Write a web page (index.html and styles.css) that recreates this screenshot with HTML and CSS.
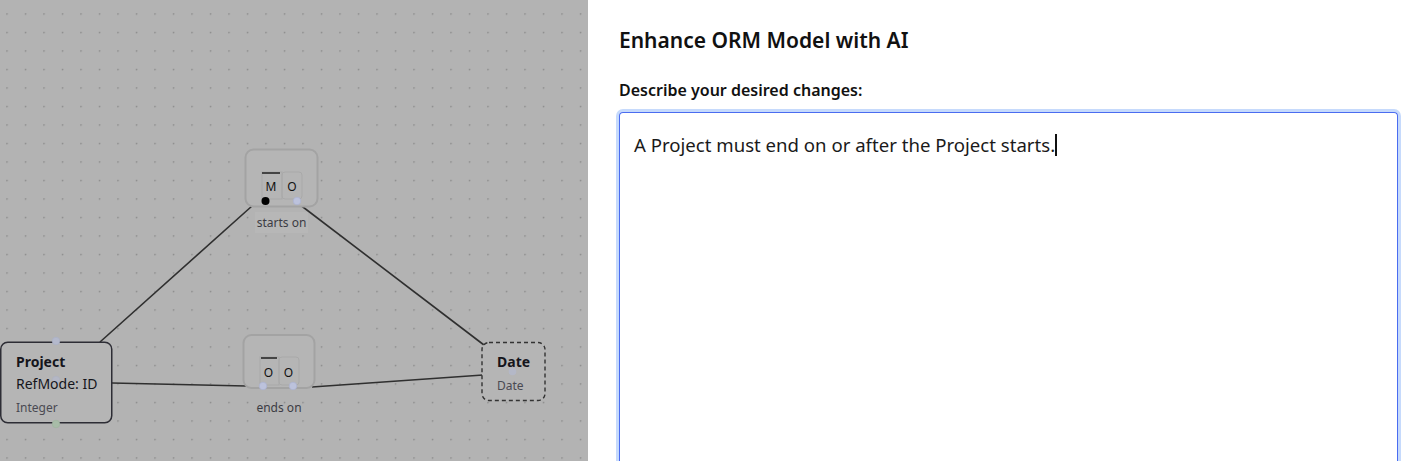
FILE: index.html
```html
<!DOCTYPE html>
<html>
<head>
<meta charset="utf-8">
<link rel="stylesheet" href="styles.css">
</head>
<body>
<div class="app">
  <div class="canvas">
    <svg class="diagram" width="588" height="461" viewBox="0 0 588 461" xmlns="http://www.w3.org/2000/svg">
      <defs>
        <pattern id="dots" x="6.3" y="13.3" width="18.5" height="18.5" patternUnits="userSpaceOnUse">
          <circle cx="0.7" cy="0.7" r="0.8" fill="#858585"/>
        </pattern>
      </defs>
      <rect x="0" y="0" width="588" height="461" fill="#b3b3b3"/>
      <rect x="0" y="0" width="588" height="461" fill="url(#dots)"/>

      <!-- edges -->
      <line x1="100" y1="342" x2="252" y2="206" stroke="#2f2f2f" stroke-width="1.6"/>
      <line x1="299" y1="204" x2="484" y2="345" stroke="#2f2f2f" stroke-width="1.6"/>
      <line x1="112" y1="383" x2="246" y2="386" stroke="#2f2f2f" stroke-width="1.6"/>
      <line x1="312" y1="387" x2="483" y2="375" stroke="#2f2f2f" stroke-width="1.6"/>

      <!-- starts on fact -->
      <rect x="245.5" y="149.5" width="72" height="57" rx="8" fill="#b5b5b5" stroke="#a3a3a3" stroke-width="2"/>
      <rect x="262" y="172" width="20" height="27" fill="none" stroke="#a9a9a9" stroke-width="1"/>
      <rect x="282" y="172" width="20" height="27" rx="3" fill="none" stroke="#a9a9a9" stroke-width="1"/>
      <rect x="262" y="172" width="18" height="2" fill="#444"/>
      <text x="271" y="190.5" class="role">M</text>
      <text x="292" y="190.5" class="role">O</text>
      <circle cx="265.5" cy="201" r="4" fill="#000"/>
      <circle cx="297" cy="201" r="3.8" fill="#bcc2dc" stroke="#a8aed0" stroke-width="0.6"/>
      <rect x="255" y="212" width="53" height="21" fill="#b7b7b7"/>
      <text x="281.5" y="226.5" class="label">starts on</text>

      <!-- ends on fact -->
      <rect x="243.5" y="335" width="71" height="53" rx="8" fill="#b5b5b5" stroke="#a3a3a3" stroke-width="2"/>
      <rect x="260" y="357" width="19" height="28" fill="none" stroke="#a9a9a9" stroke-width="1"/>
      <rect x="279" y="357" width="20" height="28" rx="3" fill="none" stroke="#a9a9a9" stroke-width="1"/>
      <rect x="261" y="357" width="16" height="2" fill="#444"/>
      <text x="268.5" y="376.5" class="role">O</text>
      <text x="288.5" y="376.5" class="role">O</text>
      <circle cx="263" cy="386" r="3.8" fill="#bcc2dc" stroke="#a8aed0" stroke-width="0.6"/>
      <circle cx="293" cy="386" r="3.8" fill="#bcc2dc" stroke="#a8aed0" stroke-width="0.6"/>
      <text x="279" y="412" class="label">ends on</text>

      <!-- Project entity -->
      <rect x="0.75" y="342.25" width="111" height="80.5" rx="7" fill="#b5b5b5" stroke="#2d2d35" stroke-width="1.5"/>
      <circle cx="56" cy="341" r="3.8" fill="#b4b9cc" stroke="#a8aec6" stroke-width="0.6"/>
      <circle cx="56" cy="380" r="3.8" fill="#b4b9cc" stroke="#a8aec6" stroke-width="0.6" opacity="0.7"/>
      <circle cx="56" cy="424" r="3.8" fill="#a8bca8" stroke="#9cb49c" stroke-width="0.6"/>
      <text x="16" y="367" class="ename">Project</text>
      <text x="16" y="389" class="eref">RefMode: ID</text>
      <text x="16" y="411.5" class="etype">Integer</text>

      <!-- Date value type -->
      <rect x="482" y="342.5" width="63" height="58" rx="7" fill="#b5b5b5" stroke="#333" stroke-width="1.4" stroke-dasharray="4 3"/>
      <circle cx="512.5" cy="371.5" r="3.8" fill="#b4b9cc" opacity="0.8"/>
      <text x="497" y="367" class="ename">Date</text>
      <text x="497" y="389.5" class="etype">Date</text>
    </svg>
  </div>
  <div class="panel">
    <h2 class="title">Enhance ORM Model with AI</h2>
    <div class="field-label">Describe your desired changes:</div>
    <div class="textarea"><span class="text">A Project must end on or after the Project starts.</span><span class="caret"></span></div>
  </div>
</div>
</body>
</html>
```

FILE: styles.css
```css
html, body {
  margin: 0;
  padding: 0;
  width: 1428px;
  height: 461px;
  overflow: hidden;
  background: #fff;
  font-family: "Noto Sans", "Open Sans", sans-serif;
}

.app {
  display: flex;
  width: 1428px;
  height: 461px;
  overflow: hidden;
}

.canvas {
  width: 588px;
  height: 461px;
  flex: 0 0 588px;
  overflow: hidden;
}

.diagram {
  display: block;
}

.diagram text {
  font-family: "Noto Sans", "Open Sans", sans-serif;
}

.diagram .role {
  font-size: 12px;
  fill: #111;
  text-anchor: middle;
}

.diagram .label {
  font-size: 12px;
  fill: #3c3c44;
  text-anchor: middle;
}

.diagram .ename {
  font-size: 14px;
  font-weight: 700;
  fill: #15151c;
}

.diagram .eref {
  font-size: 14px;
  fill: #15151c;
}

.diagram .etype {
  font-size: 12px;
  fill: #4a4a52;
}

.panel {
  flex: 1;
  height: 461px;
  box-sizing: border-box;
  overflow: hidden;
  background: #fff;
  padding: 26px 30px 0 31px;
  display: flex;
  flex-direction: column;
  min-width: 0;
}

.title {
  margin: 0;
  font-size: 21px;
  font-weight: 600;
  color: #111;
  line-height: 28px;
}

.field-label {
  margin-top: 25px;
  font-size: 16px;
  font-weight: 600;
  color: #111;
  line-height: 22px;
}

.textarea {
  margin-top: 11px;
  border: 1px solid #4a6cf0;
  border-bottom: none;
  border-radius: 4px 4px 0 0;
  box-shadow: 0 0 0 3px #c6dafc;
  flex: 1 0 auto;
  margin-bottom: -4px;
  padding: 19px 14px;
  font-size: 18.6px;
  line-height: 26px;
  color: #1a1a1a;
  white-space: pre-wrap;
}

.caret {
  display: inline-block;
  width: 1.5px;
  height: 22px;
  background: #111;
  vertical-align: -4px;
}
```
